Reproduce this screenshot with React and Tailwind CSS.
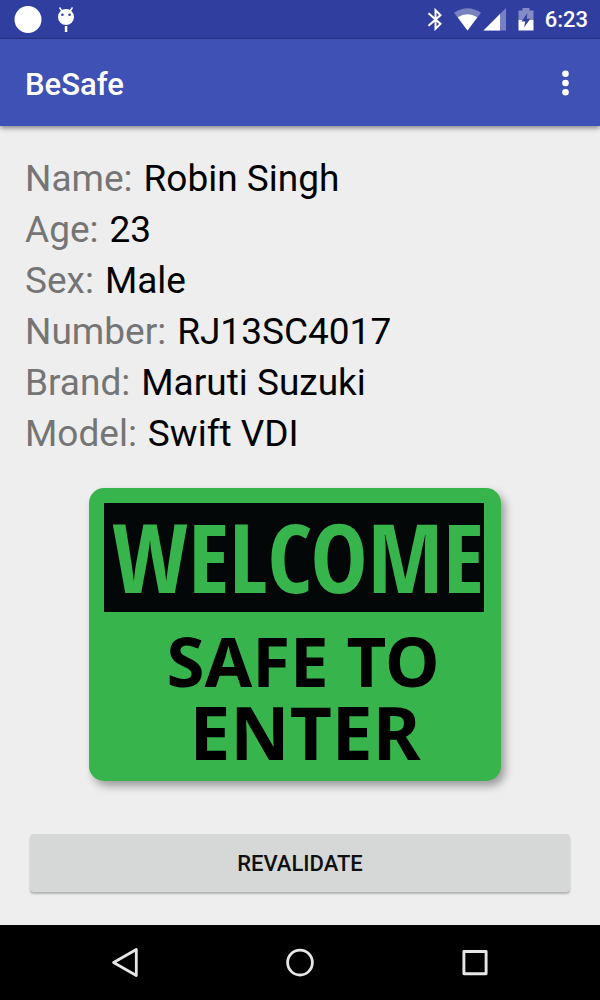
import React from "react";

const details = [
  ["Name", "Robin Singh"],
  ["Age", "23"],
  ["Sex", "Male"],
  ["Number", "RJ13SC4017"],
  ["Brand", "Maruti Suzuki"],
  ["Model", "Swift VDI"],
];

function StatusBar() {
  return (
    <div className="flex h-[39px] items-center justify-between border-b border-[#29378a] bg-[#303f9f] pr-3 pl-[14px] text-white">
      <div className="flex items-center gap-4">
        <svg width="28" height="28" viewBox="0 0 28 28" fill="currentColor" aria-hidden="true">
          <circle cx="14" cy="14.500" r="13.500" />
        </svg>
        <svg width="16" height="26" viewBox="0 0 16 26" fill="currentColor" aria-hidden="true">
          <path d="M1.500 1.500l3.500 5M14.500 1.500l-3.500 5" stroke="currentColor" strokeWidth="1.400" />
          <path fillRule="evenodd" d="M8 3a8 8 0 1 0 0 16a8 8 0 1 0 0-16ZM4.400 7.500a1.300 1.300 0 1 1 0 2.600a1.300 1.300 0 1 1 0-2.600ZM11.600 7.500a1.300 1.300 0 1 1 0 2.600a1.300 1.300 0 1 1 0-2.600Z" />
          <path d="M6.800 20h2.500v6H6.800z" />
        </svg>
      </div>
      <div className="flex items-center">
        <svg width="16" height="24" viewBox="0 0 16 24" fill="none" stroke="currentColor" strokeWidth="2" aria-hidden="true">
          <path d="M1.500 6.300 13.500 16.900 8.500 21.800V3.200L13.500 8.100 1.500 18.700" />
        </svg>
        <svg className="ml-[11px]" width="27" height="24" viewBox="0 0 27 24" fill="currentColor" aria-hidden="true">
          <path opacity=".35" d="M0 5.800Q13.500-3.400 27 5.800L13.500 23.500Z" />
          <path d="M3.700 10.300Q13.500 4.300 23.300 10.300L13.500 23.500Z" />
        </svg>
        <svg className="ml-[2px]" width="24" height="24" viewBox="0 0 24 24" fill="currentColor" aria-hidden="true">
          <path opacity=".35" d="M23 1v22.500H.5Z" />
          <path d="M17 7v16.500H.5Z" />
        </svg>
        <svg className="ml-[11px]" width="16" height="24" viewBox="0 0 16 24" aria-hidden="true">
          <path fill="#838cc5" d="M4.500 1h7v2.500H15.500V13H.5V3.500h4Z" />
          <path fill="#fff" d="M.5 13h15v10.500H.5Z" />
          <path fill="#303f9f" d="M9.500 6 3.500 14.500h3.800L6 20.500l6.300-8.800H8.600Z" />
        </svg>
        <span className="ml-[11px] pt-[2px] text-[22px] leading-6 font-medium">6:23</span>
      </div>
    </div>
  );
}

function AppBar() {
  return (
    <header className="relative flex h-[87px] items-center justify-between bg-[#3f51b5] pr-5 pl-[25px] text-white shadow-[0_2px_5px_rgba(0,0,0,0.45)]">
      <h1 className="pt-1 text-[31px] leading-9 font-medium">BeSafe</h1>
      <button type="button" aria-label="More options" className="flex w-[30px] justify-center">
        <svg width="8" height="26" viewBox="0 0 8 26" fill="currentColor" aria-hidden="true">
          <circle cx="4.500" cy="3.700" r="3.300" />
          <circle cx="4.500" cy="13" r="3.300" />
          <circle cx="4.500" cy="22.300" r="3.300" />
        </svg>
      </button>
    </header>
  );
}

function WelcomeSign() {
  return (
    <div className="mt-[29px] flex justify-center pr-[10px]">
      <section className="w-[412px] max-w-full rounded-[15px] bg-[#37b44c] pt-[15px] pr-[17px] pb-[13px] pl-[15px] text-center font-['Noto_Sans','Open_Sans',sans-serif] font-bold whitespace-nowrap shadow-[4px_5px_8px_rgba(0,0,0,0.35)]">
        <p className="flex h-[109px] items-center justify-center bg-[#030708] pb-1 pl-2 font-['Open_Sans_Condensed','Noto_Sans',sans-serif] text-[96px] leading-none text-[#37b44c]">
          WELCOME
        </p>
        <p className="mt-3 pl-[18px] leading-[72px] text-black">
          <span className="block text-[69px]">SAFE TO</span>
          <span className="block pl-1 text-[73px]">ENTER</span>
        </p>
      </section>
    </div>
  );
}

function NavigationBar() {
  return (
    <nav className="flex h-[75px] items-center justify-center gap-[135px] bg-black text-[#e6e6e6]">
      <button type="button" aria-label="Back" className="flex w-10 justify-center">
        <svg width="30" height="30" viewBox="0 0 30 30" fill="none" stroke="currentColor" strokeWidth="2.800" strokeLinejoin="round" aria-hidden="true">
          <path d="M26.300 1.500v26L3.600 14.500Z" />
        </svg>
      </button>
      <button type="button" aria-label="Home" className="flex w-10 justify-center">
        <svg width="30" height="30" viewBox="0 0 30 30" fill="none" stroke="currentColor" strokeWidth="2.800" aria-hidden="true">
          <circle cx="15" cy="14.600" r="12.400" />
        </svg>
      </button>
      <button type="button" aria-label="Recent apps" className="flex w-10 justify-center">
        <svg width="30" height="30" viewBox="0 0 30 30" fill="none" stroke="currentColor" strokeWidth="2.900" strokeLinejoin="round" aria-hidden="true">
          <path d="M3.900 3.500h22.200v22.200H3.900Z" />
        </svg>
      </button>
    </nav>
  );
}

export default function App() {
  return (
    <div className="flex min-h-screen flex-col bg-[#eeeeee] font-['Roboto',sans-serif]">
      <StatusBar />
      <AppBar />
      <main className="flex flex-1 flex-col px-[30px] pt-[27px] pb-[33px]">
        <dl className="-ml-[5px] text-[37px] leading-[51px]">
          {details.map(([label, value]) => (
            <div key={label} className="flex gap-[11px]">
              <dt className="text-[#757575]">{label}:</dt>
              <dd className="text-black">{value}</dd>
            </div>
          ))}
        </dl>
        <WelcomeSign />
        <button
          type="button"
          className="mt-auto h-[58px] rounded-[4px] bg-[#d6d8d7] pt-px text-[22px] leading-6 font-medium text-[#101010] shadow-[0_2px_2px_rgba(0,0,0,0.25)]"
        >
          REVALIDATE
        </button>
      </main>
      <NavigationBar />
    </div>
  );
}
